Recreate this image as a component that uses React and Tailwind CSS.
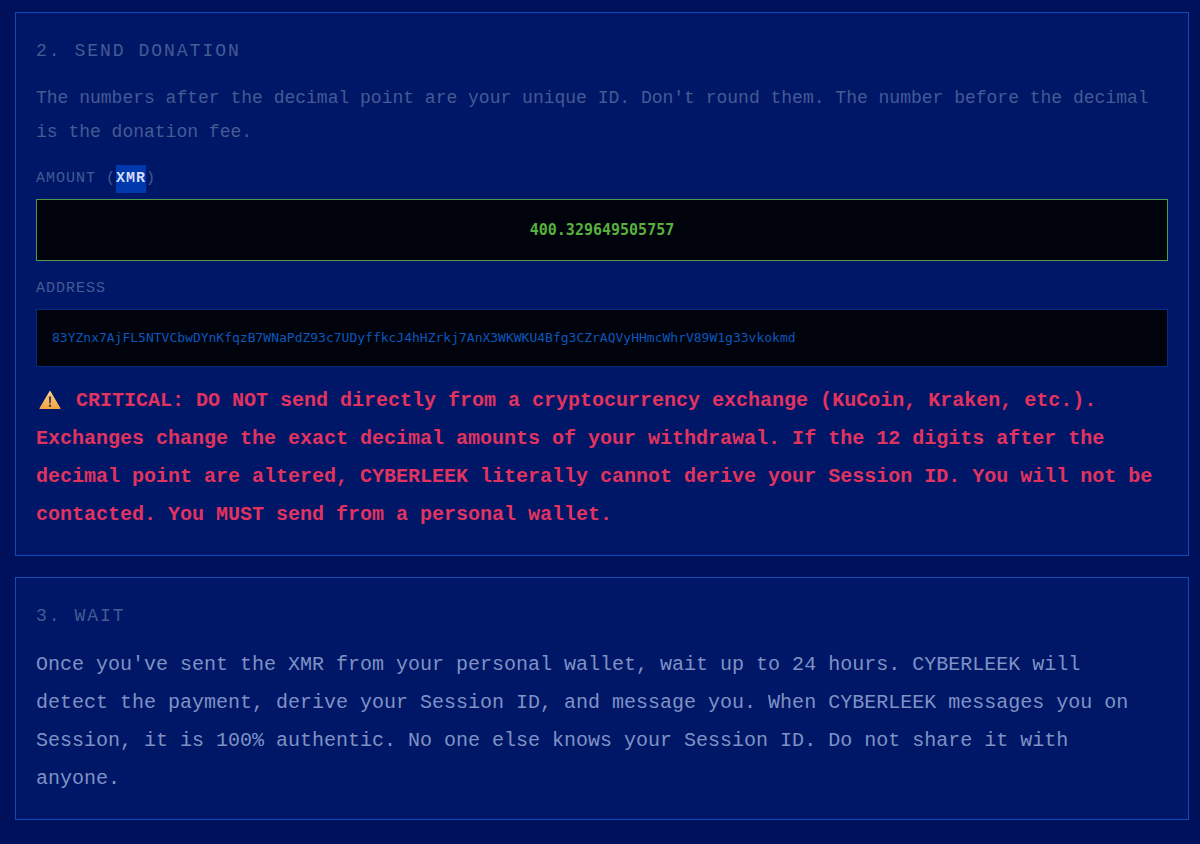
import React from "react";

const AMOUNT = "400.329649505757";
const ADDRESS =
  "83YZnx7AjFL5NTVCbwDYnKfqzB7WNaPdZ93c7UDyffkcJ4hHZrkj7AnX3WKWKU4Bfg3CZrAQVyHHmcWhrV89W1g33vkokmd";

const WarningIcon = () => (
  <svg
    viewBox="0 0 28 22"
    className="inline-block w-7 h-[22px] align-[-5px]"
    role="img"
    aria-label="Warning"
  >
    <defs>
      <linearGradient id="warning-fill" x1="0" y1="0" x2="0" y2="1">
        <stop offset="0" stopColor="#f8d08a" />
        <stop offset="1" stopColor="#f0a640" />
      </linearGradient>
    </defs>
    <path
      d="M14 2.6 23.9 19.4H4.1Z"
      fill="url(#warning-fill)"
      stroke="url(#warning-fill)"
      strokeWidth="1.2"
      strokeLinejoin="round"
    />
    <path d="M12.8 7.6h2.4l-.5 6.8h-1.4Z" fill="#4a3b3a" />
    <circle cx="14" cy="16.8" r="1.2" fill="#4a3b3a" />
  </svg>
);

const StepCard = ({ title, children }) => (
  <section className="border border-[#0f4cb8] bg-[#001768] px-5 pt-5 pb-[21px]">
    <h2 className="mb-3 text-lg leading-9 tracking-[2px] uppercase text-[#445b93]">
      {title}
    </h2>
    {children}
  </section>
);

const FieldLabel = ({ children }) => (
  <h3 className="text-[15px] leading-7 tracking-[1px] uppercase text-[#445b93]">
    {children}
  </h3>
);

const App = () => {
  return (
    <main className="min-h-screen bg-[#00115c] pt-3 pb-6 pl-[15px] pr-[11px] font-['Liberation_Mono',monospace]">
      <div className="flex flex-col gap-[21px]">
        <StepCard title="2. Send Donation">
          <p className="text-lg leading-[34px] text-[#445b93]">
            The numbers after the decimal point are your unique ID. Don't round
            them. The number before the decimal is the donation fee.
          </p>

          <div className="mt-4">
            <FieldLabel>
              Amount (
              <mark className="inline-block bg-[#0038ad] font-bold text-[#d5dcf8]">
                XMR
              </mark>
              )
            </FieldLabel>
            <div className="mt-[6px] border border-[#4a9b4c] bg-[#00030c] px-4 py-[18px] text-center font-['DejaVu_Sans_Mono',monospace] text-[15px] leading-6 font-bold break-all text-[#58b13c]">
              {AMOUNT}
            </div>
          </div>

          <div className="mt-[14px]">
            <FieldLabel>Address</FieldLabel>
            <div className="mt-[6px] border border-[#032c82] bg-[#00030c] px-[15px] py-4 font-['DejaVu_Sans_Mono',monospace] text-[13px] leading-6 break-all text-[#0b57bd]">
              {ADDRESS}
            </div>
          </div>

          <p className="mt-[15px] text-xl leading-[38px] font-bold text-[#e2335f]">
            <WarningIcon /> CRITICAL: DO NOT send directly from a cryptocurrency
            exchange (KuCoin, Kraken, etc.). Exchanges change the exact decimal
            amounts of your withdrawal. If the 12 digits after the decimal point
            are altered, CYBERLEEK literally cannot derive your Session ID. You
            will not be contacted. You MUST send from a personal wallet.
          </p>
        </StepCard>

        <StepCard title="3. Wait">
          <p className="pr-2 text-xl leading-[38px] text-[#7f92c4]">
            Once you've sent the XMR from your personal wallet, wait up to 24
            hours. CYBERLEEK will detect the payment, derive your Session ID,
            and message you. When CYBERLEEK messages you on Session, it is 100%
            authentic. No one else knows your Session ID. Do not share it with
            anyone.
          </p>
        </StepCard>
      </div>
    </main>
  );
};

export default App;
